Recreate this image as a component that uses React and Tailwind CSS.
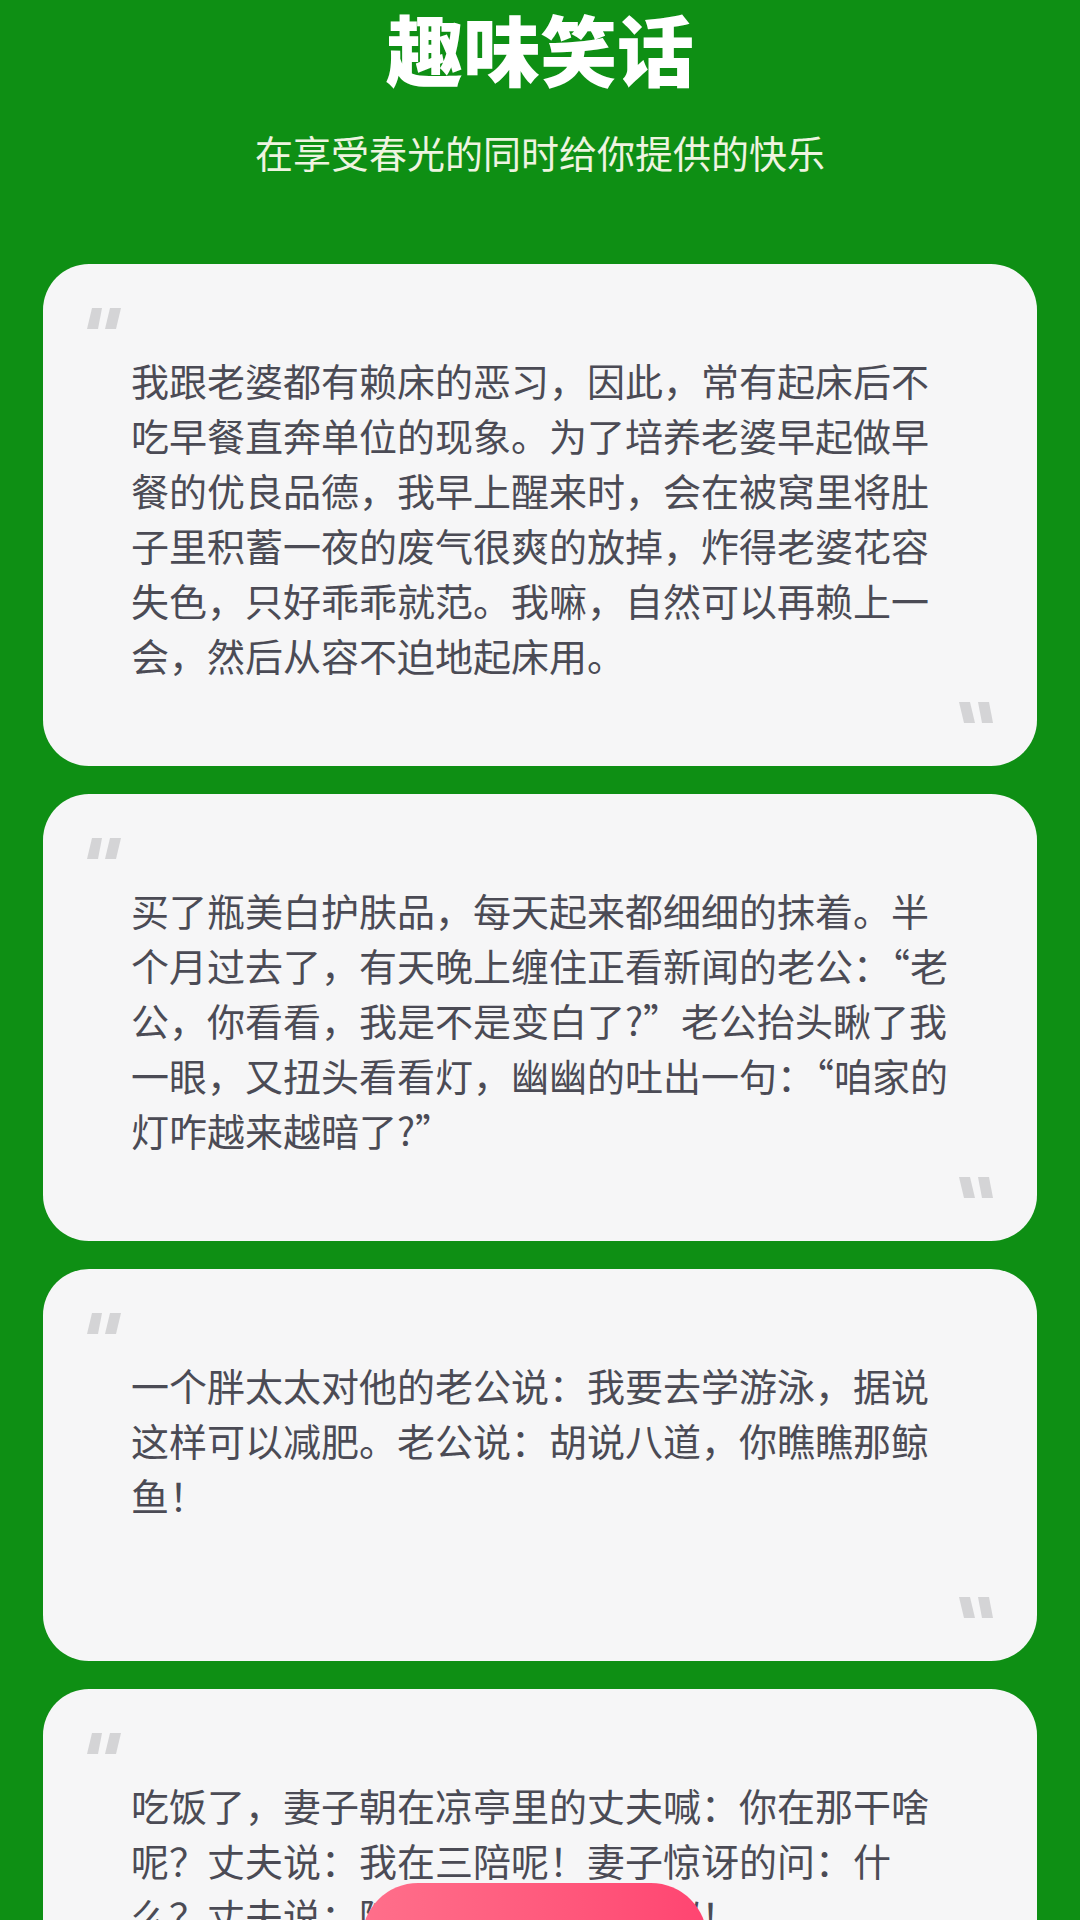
const jokes = [
  {
    id: 1,
    text: "我跟老婆都有赖床的恶习，因此，常有起床后不吃早餐直奔单位的现象。为了培养老婆早起做早餐的优良品德，我早上醒来时，会在被窝里将肚子里积蓄一夜的废气很爽的放掉，炸得老婆花容失色，只好乖乖就范。我嘛，自然可以再赖上一会，然后从容不迫地起床用。",
  },
  {
    id: 2,
    text: "买了瓶美白护肤品，每天起来都细细的抹着。半个月过去了，有天晚上缠住正看新闻的老公：“老公，你看看，我是不是变白了?”老公抬头瞅了我一眼，又扭头看看灯，幽幽的吐出一句：“咱家的灯咋越来越暗了?”",
  },
  {
    id: 3,
    text: "一个胖太太对他的老公说：我要去学游泳，据说这样可以减肥。老公说：胡说八道，你瞧瞧那鲸鱼！",
  },
  {
    id: 4,
    text: "吃饭了，妻子朝在凉亭里的丈夫喊：你在那干啥呢？丈夫说：我在三陪呢！妻子惊讶的问：什么？丈夫说：陪蚊子陪苍蝇陪蚂蚁！",
  },
];

// 引号图标
function OpenQuote() {
  return (
    <svg width="34" height="21" viewBox="0 0 34 21" className="block">
      <polygon points="5,0 15,0 11,21 0,21" fill="#d4d4d6" />
      <polygon points="23,0 34,0 29,21 18,21" fill="#d4d4d6" />
    </svg>
  );
}

function CloseQuote() {
  return (
    <svg width="34" height="21" viewBox="0 0 34 21" className="block">
      <polygon points="0,0 11,0 16,21 5,21" fill="#d4d4d6" />
      <polygon points="19,0 30,0 34,21 23,21" fill="#d4d4d6" />
    </svg>
  );
}

export default function App() {
  return (
    <div
      lang="zh-CN"
      className="min-h-[1920px] bg-[#0e8f14] pb-10"
      style={{ fontFamily: '"Noto Sans CJK SC", "Noto Sans", sans-serif' }}
    >
      {/* TITLE */}
      <h1 className="pt-[9px] text-center text-[77px] leading-none font-black text-white">
        趣味笑话
      </h1>
      <p className="mt-[47px] text-center text-[38px] leading-none text-[#eef4e0]">
        在享受春光的同时给你提供的快乐
      </p>

      {/* JOKES */}
      <div className="mt-[93px] flex flex-col gap-[28px] px-[43px]">
        {jokes.map((j) => (
          <div
            key={j.id}
            className="rounded-[46px] bg-[#f6f6f7] px-[44px] pt-[44px] pb-[43px]"
          >
            <OpenQuote />
            <p className="mt-[23px] ml-[44px] w-[824px] min-h-[220px] text-[38px] leading-[55px] text-[#4b4b55]">
              {j.text}
            </p>
            <div className="mt-[20px] flex justify-end">
              <CloseQuote />
            </div>
          </div>
        ))}
      </div>

      {/* BUTTON */}
      <div className="fixed left-[362px] top-[1883px] h-[120px] w-[345px] rounded-[56px] bg-linear-to-r from-[#ff6f8b] to-[#ff4471]" />
    </div>
  );
}
